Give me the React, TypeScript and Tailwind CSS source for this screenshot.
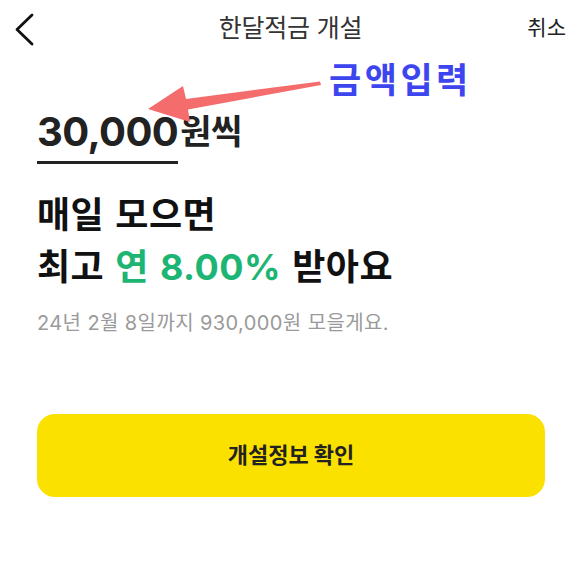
import React from "react";

const font = { fontFamily: '"Inter", "Noto Sans CJK KR", "Noto Sans", sans-serif' };

function BackIcon() {
  return (
    <svg width="24" height="34" viewBox="0 0 24 34" fill="none">
      <path d="M19 2 L4 16.5 L19 31" stroke="#111" strokeWidth="2.8" strokeLinecap="round" strokeLinejoin="round" />
    </svg>
  );
}

// red annotation arrow pointing at the amount field
function Pointer() {
  return (
    <svg className="absolute left-0 top-0 pointer-events-none" width="577" height="584" viewBox="0 0 577 584">
      <path d="M320 81.5 L186 99 L183 86 L148 109 L190 122 L188 109.5 L321 85 Z" fill="#f56c6c" />
    </svg>
  );
}

export default function App() {
  return (
    <div className="relative w-[577px] h-[584px] bg-white overflow-hidden text-[#222]" style={font}>
      <header className="relative h-[56px] flex items-center justify-center">
        <button className="absolute left-[13px] top-[13px]">
          <BackIcon />
        </button>
        <h1 className="text-[25px] text-[#333] tracking-[-0.2px] leading-[56px] ml-[4px]">한달적금 개설</h1>
        <span className="absolute right-[11px] top-0 text-[21px] leading-[56px] text-[#222]">취소</span>
      </header>

      <div className="pl-[329px] h-[48px] text-[35px] font-bold text-[#3d45ee] tracking-[3.5px] leading-[48px]">
        금액입력
      </div>

      <div className="px-[37px]">
        <div className="flex items-start mt-[4px]">
          <div className="flex flex-col">
            <span className="text-[40px] font-bold leading-[48px] text-[#222] tracking-[-0.6px]">30,000</span>
            <span className="h-[3px] bg-[#222] mt-[5px]" />
          </div>
          <span className="text-[34px] font-bold leading-[48px] text-[#222] tracking-[-0.5px] ml-[2px]">원씩</span>
        </div>

        <h2 className="mt-[25px] text-[36px] font-bold leading-[52px] text-[#111] tracking-[0.5px] [word-spacing:2px]">
          매일 모으면
          <br />
          최고 <span className="text-[#1db574]">연 8.00%</span> 받아요
        </h2>

        <p className="mt-[17px] text-[20px] leading-[26px] text-[#9a9a9a] tracking-[0.4px]">
          24년 2월 8일까지 930,000원 모을게요.
        </p>
      </div>

      <div className="pl-[37px] pr-[32px] mt-[78px]">
        <button className="w-full h-[83px] rounded-[18px] bg-[#fae100] flex items-center justify-center text-[22px] font-bold text-[#222]">
          개설정보 확인
        </button>
      </div>

      <Pointer />
    </div>
  );
}
